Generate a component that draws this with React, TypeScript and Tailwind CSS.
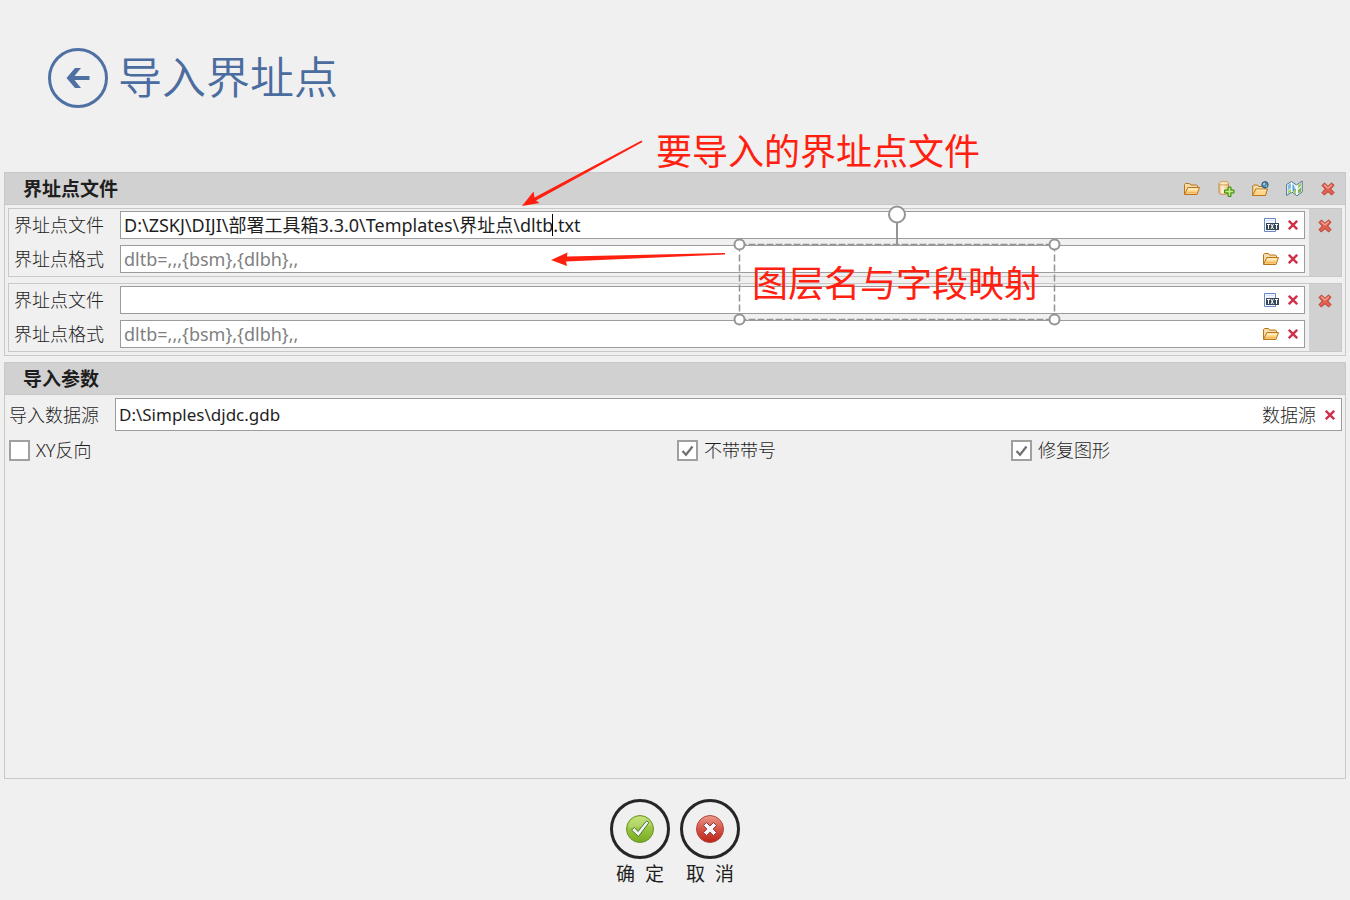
import { useState } from 'react';
import type { ReactNode } from 'react';

const UI_FONT = "font-['Noto_Sans','Noto_Sans_CJK_SC',sans-serif]";

function FolderIcon() {
  return (
    <svg width="16" height="16" viewBox="0 0 16 16" aria-hidden="true">
      <path d="M.5 13.5V3.5L1.500 2.500H5.500L6.500 4H12.500L13.500 5V7" fill="#f6dca8" stroke="#b8741e" />
      <path d="M.7 13.500L3.800 6.500H15.500L13 13.500Z" fill="#ffdb90" stroke="#b8741e" strokeLinejoin="round" />
      <path d="M4.600 7.600H14L13.600 8.800H4Z" fill="#fff2cf" />
      <path d="M2.200 12.400L3 10.800H13L12.400 12.600Z" fill="#f3b757" />
    </svg>
  );
}

function DatabaseAddIcon() {
  return (
    <svg width="17" height="16" viewBox="0 0 17 16" className="shrink-0" aria-hidden="true">
      <defs>
        <linearGradient id="db">
          <stop offset="0" stopColor="#f0bd72" />
          <stop offset=".35" stopColor="#fff3dc" />
          <stop offset="1" stopColor="#f2bd70" />
        </linearGradient>
      </defs>
      <path d="M1 2.500V11.500C1 14 10.500 14 10.500 11.500V2.500Z" fill="url(#db)" stroke="#c08a45" />
      <ellipse cx="5.750" cy="2.300" rx="4.750" ry="1.800" fill="#fdeac4" stroke="#cf9c58" />
      <path d="M10 6H13V9H16V12H13V15.500H10V12H6.500V9H10Z" fill="#8fd045" stroke="#3f8a1b" />
      <path d="M11.500 7V14.500M7.500 10.500H15" stroke="#c3ee84" />
    </svg>
  );
}

function FolderWebIcon() {
  return (
    <svg width="17" height="16" viewBox="0 0 17 16" className="shrink-0" aria-hidden="true">
      <path d="M.7 14.500V5L1.700 4H5.500L6.500 5.500H13V8" fill="#f6dca8" stroke="#b8741e" />
      <path d="M.7 14.500L3.800 8H15.500L13.500 14.500Z" fill="#ffd588" stroke="#b8741e" strokeLinejoin="round" />
      <path d="M4.500 9.200H14" stroke="#fff0c8" />
      <circle cx="13" cy="3.800" r="3.200" fill="#4f86bd" stroke="#2c5685" />
      <path d="M10.500 3L12.500 1.500L13.500 3L12 4.500ZM13.500 5L15.500 4L14.500 6.500Z" fill="#a9d890" />
    </svg>
  );
}

function MapIcon() {
  return (
    <svg width="17" height="17" viewBox="0 0 17 17" className="shrink-0" aria-hidden="true">
      <path d="M.6 4.500L5.500 1.500L10.500 5L16.200 1V12L11 15.700L5.800 12L.6 15.500Z" fill="#e9f4f8" stroke="#4d7794" />
      <path d="M2 5L5 3.200V8L2 10Z" fill="#83bbe2" />
      <path d="M2 11L5 9V11.500L2 13.500Z" fill="#9dcf54" />
      <path d="M6.500 4L8 5.500L8.500 8L10 9.500V13.500L6.500 11Z" fill="#5c9ed6" />
      <path d="M8 9L10 11V14L8 12.500ZM12 5L15 3V6L12 8.500Z" fill="#a4d04c" />
      <path d="M12 10L15 7.500V11.500L12 13.700Z" fill="#79b547" />
      <path d="M5.500 2.500V12M10.800 5.500V15" stroke="#f8fcfd" />
    </svg>
  );
}

function DeleteIcon() {
  return (
    <svg width="14" height="14" viewBox="0 0 14 14" aria-hidden="true">
      <path
        d="M3.500 1L7 4.300L10.500 1L13 3.200L9.700 7L13 10.500L10.700 13L7 9.700L3.300 13L1 10.700L4.300 7L1 3.500Z"
        fill="#e3614f"
        stroke="#b23a30"
        strokeLinejoin="round"
      />
      <path d="M3.300 2.700L7 6L10.700 2.700" fill="none" stroke="#f5a797" strokeWidth="1.300" />
    </svg>
  );
}

function ClearIcon() {
  return (
    <svg width="10" height="10" viewBox="0 0 10 10" aria-hidden="true">
      <path d="M.8 .8L9.200 9.200M9.200 .8L.8 9.200" stroke="#d0314a" strokeWidth="2.400" />
    </svg>
  );
}

function TxtIcon() {
  return (
    <svg width="16" height="16" viewBox="0 0 16 16" aria-hidden="true">
      <path d="M1.500 1.500H12.500V14.500H1.500Z" fill="#f3f6fc" stroke="#6b86c4" />
      <path d="M3 3.500H11" stroke="#dbe4f5" />
      <rect x="3" y="6" width="13" height="7" fill="#3a4856" />
      <path d="M4 7.500H7M5.500 7.500V12M8 7L10.500 12M10.500 7L8 12M12 7.500H15M13.500 7.500V12" fill="none" stroke="#fff" />
    </svg>
  );
}

function OkIcon() {
  return (
    <svg width="30" height="30" viewBox="0 0 30 30" aria-hidden="true">
      <defs>
        <linearGradient id="ok" x1="0" y1="0" x2="0" y2="1">
          <stop offset="0" stopColor="#b9de5c" />
          <stop offset="1" stopColor="#78aa22" />
        </linearGradient>
      </defs>
      <circle cx="15" cy="15" r="13.500" fill="url(#ok)" stroke="#6c9428" />
      <path d="M3 13C4 5 11 2.500 15 2.500C20 2.500 26 6 27 12C19 10 11 16 3 13Z" fill="#fff" opacity=".18" />
      <path d="M6.500 16L9.500 13.500L13 17.500L21.500 6.800L24 8.500L13.500 22.500Z" fill="#f1f5fa" stroke="#527a27" strokeLinejoin="round" />
    </svg>
  );
}

function CancelIcon() {
  return (
    <svg width="30" height="30" viewBox="0 0 30 30" aria-hidden="true">
      <defs>
        <linearGradient id="cancel" x1="0" y1="0" x2="0" y2="1">
          <stop offset="0" stopColor="#eb9a8b" />
          <stop offset=".5" stopColor="#d55548" />
          <stop offset="1" stopColor="#bb2216" />
        </linearGradient>
      </defs>
      <circle cx="15" cy="15" r="13.500" fill="url(#cancel)" stroke="#b5463c" />
      <path
        d="M11.500 8.500L15 12L18.500 8.500L21.500 11.500L18.200 15L21.500 18.500L18.500 21.500L15 18.200L11.500 21.500L8.500 18.500L11.800 15L8.500 11.500Z"
        fill="#f3f5fa"
        stroke="#8f3a35"
        strokeLinejoin="round"
      />
    </svg>
  );
}

function IconButton({ label, children }: { label: string; children: ReactNode }) {
  return (
    <button type="button" aria-label={label} className="flex h-4 w-4 shrink-0 items-center justify-center">
      {children}
    </button>
  );
}

function Section({ title, actions, className = '', children }: {
  title: string;
  actions?: ReactNode;
  className?: string;
  children: ReactNode;
}) {
  return (
    <section className={`border border-[#c8c8c8] ${className}`}>
      <header className="flex h-8 items-center justify-between border-b border-[#c8c8c8] bg-[#d1d1d1] pr-[9px] pl-[18px]">
        <h2 className="text-[19px] leading-6 font-bold">{title}</h2>
        <div className="flex gap-[18px]">{actions}</div>
      </header>
      {children}
    </section>
  );
}

function PathField({ id, label, value, placeholder, browse, caret }: {
  id: string;
  label: string;
  value?: string;
  placeholder?: string;
  browse: ReactNode;
  caret?: boolean;
}) {
  return (
    <div className="flex h-7 items-center">
      <label htmlFor={id} className="w-[106px] shrink-0 font-light">{label}</label>
      <div className="relative flex h-full min-w-0 flex-1 items-center gap-4 border border-[#9c9c9c] bg-white pr-[3px] pl-[3px]">
        <input
          id={id}
          defaultValue={value}
          placeholder={placeholder}
          className="min-w-0 flex-1 bg-transparent outline-none placeholder:text-[#808080]"
        />
        {caret && <span className="absolute top-0.5 left-[431px] h-[22px] w-px bg-black" />}
        <div className="flex items-center gap-1.5">
          <IconButton label="浏览">{browse}</IconButton>
          <IconButton label="清除"><ClearIcon /></IconButton>
        </div>
      </div>
    </div>
  );
}

function FileGroup({ index, path, caret }: { index: number; path: string; caret?: boolean }) {
  return (
    <div className="flex border border-[#c8c8c8]">
      <div className="flex min-w-0 flex-1 flex-col gap-1.5 pt-0.5 pr-1 pb-[3px] pl-[5px]">
        <PathField id={`file-${index}`} label="界址点文件" value={path} browse={<TxtIcon />} caret={caret} />
        <PathField id={`format-${index}`} label="界址点格式" placeholder="dltb=,,,{bsm},{dlbh},," browse={<FolderIcon />} />
      </div>
      <div className="flex w-8 justify-center bg-[#d1d1d1] pt-[9px]">
        <IconButton label="删除"><DeleteIcon /></IconButton>
      </div>
    </div>
  );
}

function CheckOption({ label, initial, className = '' }: { label: string; initial?: boolean; className?: string }) {
  const [checked, setChecked] = useState(!!initial);
  return (
    <label className={`flex items-center gap-1.5 ${className}`}>
      <span className="relative flex">
        <input
          type="checkbox"
          checked={checked}
          onChange={(e) => setChecked(e.target.checked)}
          className="h-[21px] w-[21px] appearance-none border-2 border-[#a0a0a0] bg-white"
        />
        {checked && (
          <svg className="pointer-events-none absolute inset-0" width="21" height="21" viewBox="0 0 21 21">
            <path d="M5.500 11L9 14.800L15.500 6.500" fill="none" stroke="#707070" strokeWidth="2.200" />
          </svg>
        )}
      </span>
      <span className="font-light">{label}</span>
    </label>
  );
}

function RoundButton({ label, children }: { label: string; children: ReactNode }) {
  return (
    <button type="button" className="flex flex-col items-center">
      <span className="flex h-[60px] w-[60px] items-center justify-center rounded-full border-3 border-[#262626]">
        {children}
      </span>
      <span className="text-[19px] leading-[30px] whitespace-pre">{label}</span>
    </button>
  );
}

// Callouts drawn over the form
function Annotations() {
  return (
    <div className="pointer-events-none absolute inset-0 overflow-hidden text-4xl leading-[44px] whitespace-nowrap text-[#ff2010]">
      <svg className="absolute top-0 left-0" width="1100" height="340" viewBox="0 0 1100 340">
        <path d="M641.500 140.500L534.500 197.500L533.500 191.500L522 206L539.500 203L536 200.500L642.500 142Z" fill="#ff2010" />
        <path d="M725 253L567 256.500L567.500 252.500L551 260L567 266L566 261.500L725 254.500Z" fill="#ff2010" />
        <g fill="none" stroke="#949494">
          <path d="M739.500 244.500H1054.500M739.500 319.500H1054.500" strokeWidth="1.500" strokeDasharray="7 2" />
          <path d="M739.500 244.500V319.500M1054.500 244.500V319.500" strokeWidth="1.500" strokeDasharray="7 3" />
          <path d="M897 222V245" strokeWidth="2" />
        </g>
        <g fill="#fff" stroke="#949494" strokeWidth="2">
          <circle cx="897" cy="214.500" r="8" />
          <circle cx="739.500" cy="244.500" r="5" />
          <circle cx="1054.500" cy="244.500" r="5" />
          <circle cx="739.500" cy="319.500" r="5" />
          <circle cx="1054.500" cy="319.500" r="5" />
        </g>
      </svg>
      <p className="absolute top-[130px] left-[656px]">要导入的界址点文件</p>
      <p className="absolute top-[262px] left-[752px]">图层名与字段映射</p>
    </div>
  );
}

export default function App() {
  return (
    <main className={`relative flex min-h-screen flex-col bg-[#f0f0f0] text-lg leading-6 text-[#1e1e1e] ${UI_FONT}`}>
      <div className="flex h-[172px] items-start gap-2.5 pt-12 pl-12 text-[#4b6c9f]">
        <button
          type="button"
          aria-label="返回"
          className="flex h-[60px] w-[60px] items-center justify-center rounded-full border-3 border-[#4f70a3]"
        >
          <svg width="24" height="22" viewBox="0 0 24 22" aria-hidden="true">
            <path d="M9 1H15L8.500 9H23.500V13H8.500L15 21H9L.5 11Z" fill="#4f70a3" />
          </svg>
        </button>
        <h1 className="text-[44px] leading-[58px] font-[350]">导入界址点</h1>
      </div>

      <form className="flex flex-1 flex-col gap-1.5 px-1" onSubmit={(e) => e.preventDefault()}>
        <Section
          title="界址点文件"
          actions={
            <>
              <IconButton label="打开"><FolderIcon /></IconButton>
              <IconButton label="添加数据源"><DatabaseAddIcon /></IconButton>
              <IconButton label="打开网络文件夹"><FolderWebIcon /></IconButton>
              <IconButton label="地图"><MapIcon /></IconButton>
              <IconButton label="全部删除"><DeleteIcon /></IconButton>
            </>
          }
        >
          <div className="flex flex-col gap-1.5 p-[3px]">
            <FileGroup index={1} path={'D:\\ZSKJ\\DIJI\\部署工具箱3.3.0\\Templates\\界址点\\dltb.txt'} caret />
            <FileGroup index={2} path="" />
          </div>
        </Section>

        <Section title="导入参数" className="flex-1">
          <div className="flex h-9 items-center pt-[3px] pr-[3px] pl-1">
            <label htmlFor="source" className="w-[106px] shrink-0 font-light">导入数据源</label>
            <div className="flex h-full min-w-0 flex-1 items-center border border-[#9c9c9c] bg-white pr-[3px] pl-[3px]">
              <input id="source" defaultValue="D:\Simples\djdc.gdb" className="min-w-0 flex-1 bg-transparent text-[17px] outline-none" />
              <button type="button" className="mr-1.5 font-light">数据源</button>
              <IconButton label="清除"><ClearIcon /></IconButton>
            </div>
          </div>
          <div className="grid grid-cols-4 pt-[7px] pl-1">
            <CheckOption label="XY反向" className="col-span-2" />
            <CheckOption label="不带带号" initial />
            <CheckOption label="修复图形" initial />
          </div>
        </Section>
      </form>

      <footer className="flex h-[121px] justify-center gap-2.5 pt-5">
        <RoundButton label="确  定"><OkIcon /></RoundButton>
        <RoundButton label="取  消"><CancelIcon /></RoundButton>
      </footer>

      <Annotations />
    </main>
  );
}
